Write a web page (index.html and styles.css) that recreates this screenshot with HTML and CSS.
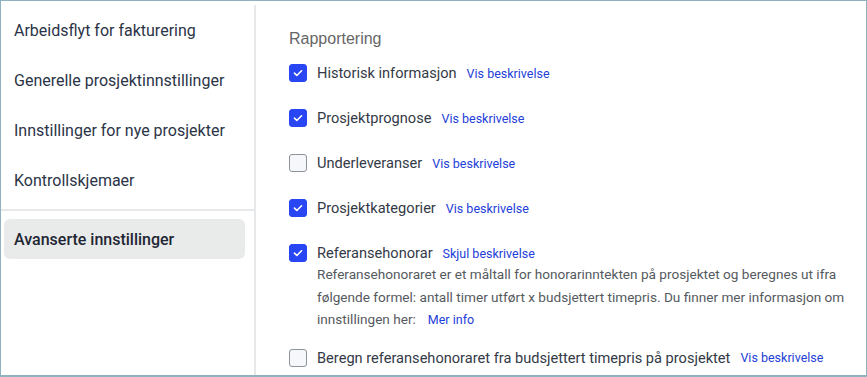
FILE: index.html
```html
<!DOCTYPE html>
<html lang="no">
<head>
<meta charset="utf-8">
<link rel="stylesheet" href="styles.css">
</head>
<body>
<div class="frame">
  <nav class="sidebar">
    <div class="group">
      <div class="nav-item">Arbeidsflyt for fakturering</div>
      <div class="nav-item">Generelle prosjektinnstillinger</div>
      <div class="nav-item">Innstillinger for nye prosjekter</div>
      <div class="nav-item">Kontrollskjemaer</div>
    </div>
    <div class="nav-item active">Avanserte innstillinger</div>
  </nav>
  <div class="divider"></div>
  <main class="content">
    <h2 class="title">Rapportering</h2>
    <div class="row">
      <span class="cb checked"><svg viewBox="0 0 18 18"><path d="M5 9.2l2.7 2.6L13 6.5" /></svg></span>
      <span class="label">Historisk informasjon</span>
      <a class="link">Vis beskrivelse</a>
    </div>
    <div class="row">
      <span class="cb checked"><svg viewBox="0 0 18 18"><path d="M5 9.2l2.7 2.6L13 6.5" /></svg></span>
      <span class="label">Prosjektprognose</span>
      <a class="link">Vis beskrivelse</a>
    </div>
    <div class="row">
      <span class="cb"></span>
      <span class="label">Underleveranser</span>
      <a class="link">Vis beskrivelse</a>
    </div>
    <div class="row">
      <span class="cb checked"><svg viewBox="0 0 18 18"><path d="M5 9.2l2.7 2.6L13 6.5" /></svg></span>
      <span class="label">Prosjektkategorier</span>
      <a class="link">Vis beskrivelse</a>
    </div>
    <div class="row">
      <span class="cb checked"><svg viewBox="0 0 18 18"><path d="M5 9.2l2.7 2.6L13 6.5" /></svg></span>
      <span class="label">Referansehonorar</span>
      <a class="link">Skjul beskrivelse</a>
    </div>
    <p class="desc">Referansehonoraret er et måltall for honorarinntekten på prosjektet og beregnes ut ifra følgende formel: antall timer utført x budsjettert timepris. Du finner mer informasjon om innstillingen her:<a class="link more">Mer info</a></p>
    <div class="row last">
      <span class="cb"></span>
      <span class="label">Beregn referansehonoraret fra budsjettert timepris på prosjektet</span>
      <a class="link">Vis beskrivelse</a>
    </div>
  </main>
</div>
</body>
</html>
```
FILE: styles.css
```css
* { box-sizing: border-box; }
html, body { margin: 0; padding: 0; background: #fff; }
body { font-family: Roboto, "Noto Sans", sans-serif; }

.frame {
  width: 867px;
  height: 377px;
  border: 1px solid #8fb3c0;
  border-bottom-width: 2px;
  display: flex;
  overflow: hidden;
  background: #fff;
}

.sidebar {
  width: 253px;
  flex: none;
  padding-top: 4px;
  display: flex;
  flex-direction: column;
}

.group {
  padding-bottom: 4px;
  border-bottom: 2px solid #e6e8ea;
}

.nav-item {
  height: 50px;
  display: flex;
  align-items: center;
  padding-left: 13px;
  font-size: 16px;
  color: #2b3447;
}

.nav-item.active {
  height: 40px;
  margin: 8px 9px 0 3px;
  padding-left: 10px;
  background: #e9ebeb;
  border-radius: 6px;
  font-weight: 500;
  color: #1f2633;
}

.divider {
  width: 2px;
  flex: none;
  margin-top: 4px;
  background: #e6e8ea;
}

.content {
  flex: 1;
  padding: 28px 0 0 33px;
}

.title {
  margin: 0 0 13px;
  font-family: "Liberation Sans", Arial, sans-serif;
  font-size: 16px;
  line-height: 20px;
  font-weight: 400;
  color: #666;
}

.row {
  height: 22px;
  display: flex;
  align-items: center;
  margin-bottom: 23px;
}

.cb {
  width: 18px;
  height: 18px;
  flex: none;
  border: 1px solid #8e939b;
  background: #f6f7fa;
  border-radius: 3px;
  margin-right: 10px;
  display: flex;
}

.cb.checked {
  background: #2946f5;
  border-color: #2946f5;
}

.cb svg {
  width: 16px;
  height: 16px;
  fill: none;
  stroke: #fff;
  stroke-width: 1.8;
  stroke-linecap: round;
  stroke-linejoin: round;
}

.label {
  font-size: 14.6px;
  color: #333a46;
}

.link {
  font-size: 12.5px;
  color: #2340d8;
  margin-left: 10px;
  cursor: pointer;
}

.desc {
  margin: -24px 0 0 28px;
  max-width: 540px;
  font-size: 13.6px;
  line-height: 22.5px;
  color: #555a60;
}

.desc .more { margin-left: 12px; }

.row.last { margin-top: 15px; }
```
